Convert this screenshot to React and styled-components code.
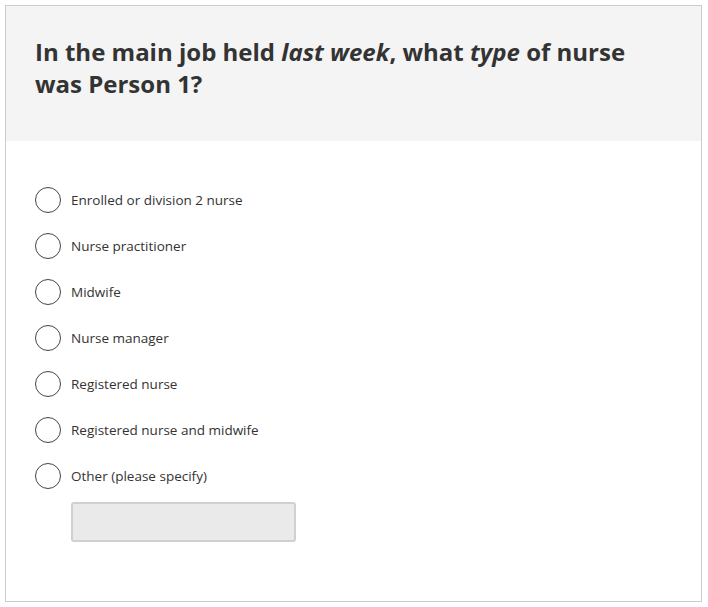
import styled, { createGlobalStyle } from "styled-components"

const GlobalStyle = createGlobalStyle`
  body {
    margin: 0;
    padding: 5px 6px 5px 5px;
    background: #fff;
    font-family: "Open Sans", "Noto Sans", sans-serif;
    color: #333;
  }
`

const Card = styled.div`
  border: 1px solid #ccc;
  background: #fff;
`

const Header = styled.div`
  background: #f4f4f4;
  padding: 30px 60px 41px 29px;
`

const Question = styled.h1`
  margin: 0;
  font-size: 24px;
  line-height: 32px;
  font-weight: 700;
  color: #333;
  letter-spacing: 0;
  & em { font-style: italic; }
`

const Options = styled.div`
  display: flex;
  flex-direction: column;
  padding: 36px 29px 59px 29px;
`

const Row = styled.label`
  display: flex;
  align-items: center;
  height: 46px;
  gap: 10px;
  cursor: pointer;
`

const Circle = styled.span`
  width: 26px;
  height: 26px;
  border: 1.3px solid #444;
  border-radius: 50%;
  box-sizing: border-box;
  flex: none;
  background: #fff;
`

const Label = styled.span`
  font-size: 13.5px;
  color: #333;
`

const SpecifyInput = styled.input`
  margin: 3px 0 0 36px;
  width: 225px;
  height: 40px;
  box-sizing: border-box;
  background: #eaeaea;
  border: 2px solid #d0d0d0;
  border-radius: 3px;
  outline: none;
`

const options = [
  "Enrolled or division 2 nurse",
  "Nurse practitioner",
  "Midwife",
  "Nurse manager",
  "Registered nurse",
  "Registered nurse and midwife",
  "Other (please specify)",
]

export default function App() {
  return (
    <>
      <GlobalStyle />
      <Card>
        <Header>
          <Question>
            In the main job held <em>last week</em>, what <em>type</em> of nurse
            was Person 1?
          </Question>
        </Header>
        <Options>
          {options.map((o) => (
            <Row key={o}>
              <Circle />
              <Label>{o}</Label>
            </Row>
          ))}
          <SpecifyInput disabled />
        </Options>
      </Card>
    </>
  )
}
